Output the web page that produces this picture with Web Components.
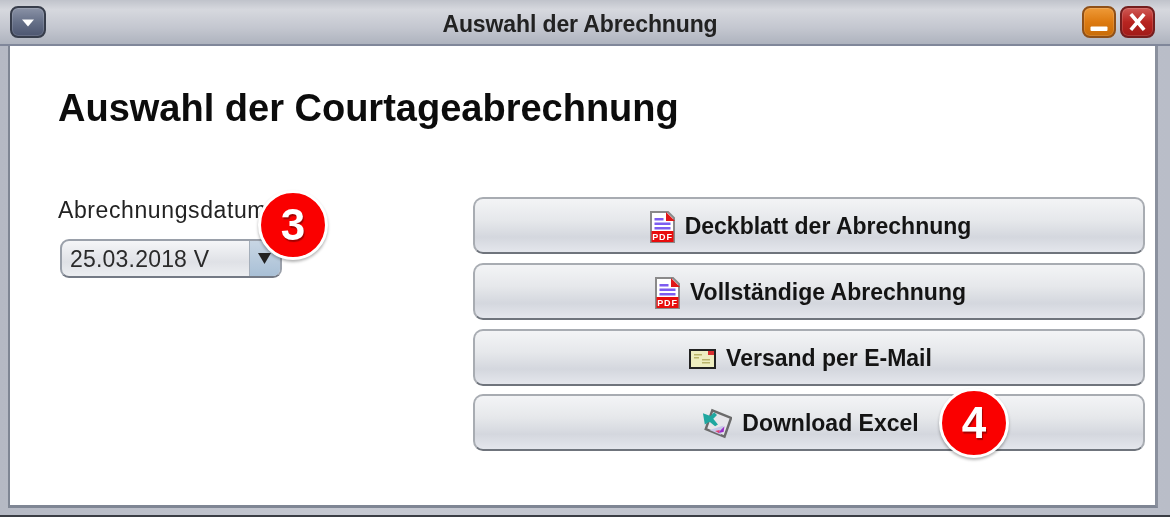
<!DOCTYPE html>
<html>
<head>
<meta charset="utf-8">
<title>Auswahl der Abrechnung</title>
<style>
html, body { margin: 0; padding: 0; background: #fff; }
body { font-family: "Liberation Sans", Arial, sans-serif; }
</style>
</head>
<body>
<app-window title="Auswahl der Abrechnung">
    <courtage-dialog></courtage-dialog>
</app-window>

<script>
class FrameButton extends HTMLElement {
    constructor() {
        super();
        const kind = this.getAttribute("kind");
        const glyphs = {
            menu: `<path d="M9 11.500h12l-6 7z" fill="#fff"/>`,
            min: `<rect x="6.500" y="18.500" width="17" height="4.500" rx="1" fill="#fff"/>`,
            close: `<path d="M9.500 7.500l11 13M20.500 7.500l-11 13" stroke="#fff" stroke-width="3.600" stroke-linecap="square" fill="none"/>`
        };
        this.attachShadow({ mode: "open" });
        this.shadowRoot.innerHTML = `<style>
            :host {
                display: block;
                width: 36px;
                height: 32px;
                box-sizing: border-box;
                border-radius: 8px;
                border: 2px solid var(--edge);
                background: linear-gradient(var(--top), var(--mid) 50%, var(--low));
                box-shadow: inset 0 0 0 1px rgba(255,255,255,.14);
            }
            :host([kind=menu]) { --edge: #373d4b; --top: #8a92a6; --mid: #667088; --low: #4d5670; }
            :host([kind=min]) { --edge: #8f5018; --top: #ee9a38; --mid: #dd7a10; --low: #c86c08; width: 34px; }
            :host([kind=close]) { --edge: #741e1e; --top: #cf5a55; --mid: #b82420; --low: #a01a18; width: 35px; }
            svg { display: block; width: 100%; height: 100%; }
        </style><svg viewBox="0 0 30 28">${glyphs[kind]}</svg>`;
    }
}
customElements.define("frame-button", FrameButton);

class AppWindow extends HTMLElement {
    constructor() {
        super();
        this.attachShadow({ mode: "open" });
        this.shadowRoot.innerHTML = `<style>
            :host {
                display: flex;
                flex-direction: column;
                width: 1170px;
                height: 517px;
                box-sizing: border-box;
                overflow: hidden;
                background: linear-gradient(90deg, #b5b9c4, #c6c9d2 30%, #b9bdc8);
                border-bottom: 2px solid #3a3d44;
                filter: blur(.45px);
            }
            .bar {
                display: flex;
                align-items: center;
                height: 46px;
                flex: none;
                box-sizing: border-box;
                padding: 1px 15px 1px 10px;
                background: linear-gradient(#c0c3cb, #d6d8de 22%, #c3c6cf 65%, #aeb3be);
                border-bottom: 2px solid #80879a;
            }
            .title {
                flex: 1;
                text-align: center;
                font-size: 23px;
                font-weight: bold;
                letter-spacing: -.12px;
                color: #222;
                padding: 4px 0 0 32px;
            }
            .controls { display: flex; gap: 4px; }
            .body {
                flex: 1;
                display: flex;
                min-height: 0;
                padding: 0 12px 7px 8px;
            }
            .inner {
                flex: 1;
                box-sizing: border-box;
                background: #fff;
                border-left: 2px solid #7f8694;
                border-right: 3px solid #8a909d;
                border-bottom: 3px solid #7f8694;
            }
        </style>
        <div class="bar">
            <frame-button kind="menu"></frame-button>
            <div class="title">${this.getAttribute("title")}</div>
            <div class="controls">
                <frame-button kind="min"></frame-button>
                <frame-button kind="close"></frame-button>
            </div>
        </div>
        <div class="body"><div class="inner"><slot></slot></div></div>`;
    }
}
customElements.define("app-window", AppWindow);

class CountBadge extends HTMLElement {
    constructor() {
        super();
        this.attachShadow({ mode: "open" });
        this.shadowRoot.innerHTML = `<style>
            :host {
                position: absolute;
                left: var(--x);
                top: var(--y);
                display: flex;
                align-items: center;
                justify-content: center;
                width: 70px;
                height: 70px;
                box-sizing: border-box;
                border-radius: 50%;
                background: #fa0000;
                border: 3px solid #fff;
                box-shadow: 0 2px 3px rgba(0,0,0,.3);
                color: #fff;
                font: bold 44px "Liberation Sans", Arial, sans-serif;
                text-shadow: 1px 2px 1px rgba(90,0,0,.55);
            }
        </style><slot></slot>`;
    }
}
customElements.define("count-badge", CountBadge);

class ComboBox extends HTMLElement {
    constructor() {
        super();
        this.attachShadow({ mode: "open" });
        this.shadowRoot.innerHTML = `<style>
            :host {
                display: flex;
                width: 222px;
                height: 39px;
                box-sizing: border-box;
                border: 2px solid #9aa0aa;
                border-bottom-color: #747a85;
                border-radius: 9px;
                overflow: hidden;
                background: linear-gradient(#f5f6f8, #dfe1e6 60%, #eceef1);
                font-size: 23px;
                color: #2a2a2a;
            }
            .value { flex: 1; padding-left: 8px; line-height: 37px; letter-spacing: .2px; }
            .arrow {
                width: 31px;
                display: flex;
                align-items: center;
                justify-content: center;
                padding-right: 2px;
                box-sizing: border-box;
                background: linear-gradient(#c8d6e4, #a9c0d6);
                border-left: 1px solid #a4aeba;
            }
            svg { width: 13px; height: 11px; }
        </style>
        <div class="value"><slot></slot></div>
        <div class="arrow"><svg viewBox="0 0 13 11"><path d="M0 0h13L6.500 11z" fill="#222"/></svg></div>`;
    }
}
customElements.define("combo-box", ComboBox);

class ActionButton extends HTMLElement {
    constructor() {
        super();
        this.attachShadow({ mode: "open" });
        this.shadowRoot.innerHTML = `<style>
            :host {
                display: flex;
                align-items: center;
                justify-content: center;
                gap: 10px;
                height: 57px;
                box-sizing: border-box;
                padding: 2px 0 0 3px;
                border: 2px solid #a8acb2;
                border-bottom: 2px solid #6f747c;
                border-radius: 10px;
                background: linear-gradient(#f3f4f6, #e6e8eb 40%, #d4d7de 72%, #e4e6ec);
                font-size: 23px;
                font-weight: bold;
                color: #141414;
            }
            ::slotted(svg) { display: block; flex: none; }
        </style><slot name="icon"></slot><slot></slot>`;
    }
}
customElements.define("action-button", ActionButton);

const PDF_ICON = `<svg slot="icon" width="25" height="32" viewBox="0 0 25 32">
    <path d="M1 1h17l6 6v24H1z" fill="#fff" stroke="#8a8a8a" stroke-width="2"/>
    <path d="M16 1l9 9h-9z" fill="#e01818"/>
    <path d="M4.500 7h9v2.500h-9zM4.500 11.500h16V14h-16zM4.500 16h16v2.500h-16z" fill="#7d5cf0"/>
    <rect x="1.500" y="20" width="22" height="11" fill="#e80c0c"/>
    <text x="12.500" y="29" text-anchor="middle" font-family="Liberation Sans" font-weight="bold" font-size="9" letter-spacing=".8" fill="#fff">PDF</text>
</svg>`;

const MAIL_ICON = `<svg slot="icon" width="27" height="20" viewBox="0 0 27 20">
    <rect x="1" y="1" width="25" height="18" fill="#eeeec0" stroke="#222" stroke-width="2"/>
    <rect x="19" y="2" width="6" height="4" fill="#d83030"/>
    <path d="M5 5h8v1.500H5zM5 8h5v1.500H5zM13 10h8v1.500h-8zM13 13h8v1.500h-8z" fill="#b9b46a"/>
</svg>`;

const EXCEL_ICON = `<svg slot="icon" width="30" height="31" viewBox="0 0 32 32">
    <path d="M11 2l20 8-7 20-20-8z" fill="#e6e6ea" stroke="#6b6b6b" stroke-width="2.600"/>
    <path d="M1 5l8 3 4-4 3 3-4 4 5 6-3 2-6-5-5 3z" fill="#1fa7a0"/>
    <path d="M8 23l12 5 3-10z" fill="#c8c8e8"/>
    <path d="M17 26l6-1 1-6z" fill="#9a2cc8"/>
    <path d="M14 24l4 2 1-3z" fill="#e04070"/>
</svg>`;

class CourtageDialog extends HTMLElement {
    constructor() {
        super();
        this.attachShadow({ mode: "open" });
        this.shadowRoot.innerHTML = `<style>
            :host {
                display: block;
                position: relative;
                height: 100%;
                box-sizing: border-box;
                padding: 37px 10px 0 48px;
                color: #111;
            }
            h1 {
                margin: 0;
                font-size: 38px;
                line-height: 50px;
                font-weight: bold;
                color: #0c0c0c;
            }
            .row {
                display: flex;
                justify-content: space-between;
                margin-top: 64px;
            }
            .label { font-size: 23px; line-height: 26px; letter-spacing: .6px; color: #222; }
            combo-box { margin: 16px 0 0 2px; }
            .right {
                width: 672px;
                display: flex;
                flex-direction: column;
                gap: 9px;
            }
            .right action-button:last-child { margin-top: -1px; }
            count-badge.three { --x: 248px; --y: 144px; }
            count-badge.four { --x: 929px; --y: 342px; }
        </style>
        <h1>Auswahl der Courtageabrechnung</h1>
        <div class="row">
            <div class="left">
                <div class="label">Abrechnungsdatum</div>
                <combo-box>25.03.2018 V</combo-box>
            </div>
            <div class="right">
                <action-button>${PDF_ICON}Deckblatt der Abrechnung</action-button>
                <action-button>${PDF_ICON}Vollständige Abrechnung</action-button>
                <action-button>${MAIL_ICON}Versand per E-Mail</action-button>
                <action-button>${EXCEL_ICON}Download Excel</action-button>
            </div>
        </div>
        <count-badge class="three">3</count-badge>
        <count-badge class="four">4</count-badge>`;
    }
}
customElements.define("courtage-dialog", CourtageDialog);
</script>
</body>
</html>
